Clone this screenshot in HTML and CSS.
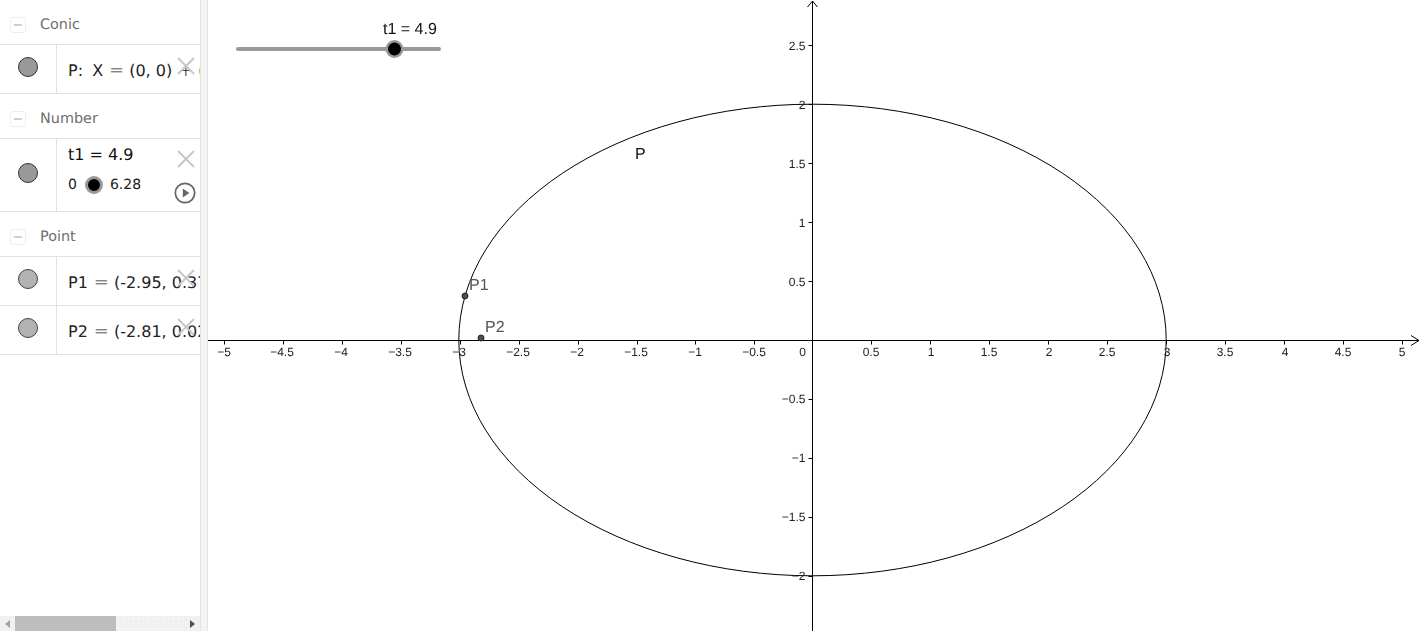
FILE: index.html
```html
<!DOCTYPE html>
<html lang="en">
<head>
<meta charset="utf-8">
<title>Conic</title>
<link rel="stylesheet" href="styles.css">
</head>
<body>
<div class="app">
  <aside class="algebra">
    <div class="tree">
      <div class="group"><span class="toggle"><i></i></span><span class="group-name">Conic</span></div>
      <div class="item item-50">
        <div class="marble-cell"><span class="marble dark"></span></div>
        <div class="formula"><span class="math">P<span class="colon">:</span> X<span class="op">=</span>(0, 0)<span class="op">+</span>(3 cos(t), 2 sin(t))</span></div>
        <svg class="close" viewBox="0 0 18 18"><path d="M1 1L17 17M17 1L1 17"/></svg>
      </div>
      <div class="group"><span class="toggle"><i></i></span><span class="group-name">Number</span></div>
      <div class="item item-74">
        <div class="marble-cell"><span class="marble dark"></span></div>
        <div class="formula slider-formula">
          <div class="plain">t1 = 4.9</div>
          <div class="minislider"><span>0</span><span class="knob"></span><span>6.28</span></div>
        </div>
        <svg class="close" viewBox="0 0 18 18"><path d="M1 1L17 17M17 1L1 17"/></svg>
        <svg class="play" viewBox="0 0 20 20"><circle cx="10" cy="10" r="8.8"/><path d="M8 6L14 10L8 14Z"/></svg>
      </div>
      <div class="group"><span class="toggle"><i></i></span><span class="group-name">Point</span></div>
      <div class="item item-50">
        <div class="marble-cell"><span class="marble light"></span></div>
        <div class="formula"><span class="math">P1<span class="op">=</span>(-2.95, 0.37)</span></div>
        <svg class="close" viewBox="0 0 18 18"><path d="M1 1L17 17M17 1L1 17"/></svg>
      </div>
      <div class="item item-50">
        <div class="marble-cell"><span class="marble light"></span></div>
        <div class="formula"><span class="math">P2<span class="op">=</span>(-2.81, 0.02)</span></div>
        <svg class="close" viewBox="0 0 18 18"><path d="M1 1L17 17M17 1L1 17"/></svg>
      </div>
    </div>
    <div class="hscroll">
      <span class="arrow left"></span>
      <span class="thumb"></span>
      <span class="rest"></span>
      <span class="arrow right"></span>
    </div>
  </aside>
  <div class="splitter"></div>
  <main class="graphics">
    <svg class="plot" viewBox="208 0 1214 633" width="1214" height="633">
      <g class="axis">
        <path d="M208 340.5H1419M1411 335.5L1419 340.5L1411 345.5"/>
        <path d="M812.5 631V1M807.5 7L812.5 1L817.5 7"/>
        <path d="M224.5 340.5v4M283.5 340.5v4M342.5 340.5v4M401.5 340.5v4M460.5 340.5v4M519.5 340.5v4M578.5 340.5v4M637.5 340.5v4M695.5 340.5v4M754.5 340.5v4M871.5 340.5v4M930.5 340.5v4M989.5 340.5v4M1048.5 340.5v4M1107.5 340.5v4M1166.5 340.5v4M1225.5 340.5v4M1284.5 340.5v4M1343.5 340.5v4M1402.5 340.5v4"/>
        <path d="M808.5 45.5h4M808.5 104.5h4M808.5 163.5h4M808.5 222.5h4M808.5 281.5h4M808.5 399.5h4M808.5 458.5h4M808.5 517.5h4M808.5 576.5h4"/>
      </g>
      <ellipse class="conic" cx="812.5" cy="340" rx="353.7" ry="235.8"/>
      <g class="ticks-x">
        <text x="224" y="356">−5</text><text x="282" y="356">−4.5</text><text x="341" y="356">−4</text><text x="400" y="356">−3.5</text><text x="459" y="356">−3</text><text x="518" y="356">−2.5</text><text x="577" y="356">−2</text><text x="636" y="356">−1.5</text><text x="695" y="356">−1</text><text x="754" y="356">−0.5</text>
        <text x="802.500" y="356">0</text>
        <text x="871" y="356">0.5</text><text x="931" y="356">1</text><text x="989" y="356">1.5</text><text x="1049" y="356">2</text><text x="1107" y="356">2.5</text><text x="1167" y="356">3</text><text x="1225" y="356">3.5</text><text x="1285" y="356">4</text><text x="1343" y="356">4.5</text><text x="1402" y="356">5</text>
      </g>
      <g class="ticks-y">
        <text x="805.500" y="50">2.5</text><text x="805.500" y="109">2</text><text x="805.500" y="168">1.5</text><text x="805.500" y="227">1</text><text x="805.500" y="286">0.5</text>
        <text x="805.500" y="403">−0.5</text><text x="805.500" y="462">−1</text><text x="805.500" y="521">−1.5</text><text x="805.500" y="580">−2</text>
      </g>
      <text class="label dark-label" x="635" y="159">P</text>
      <text class="label" x="469" y="290">P1</text>
      <text class="label" x="485" y="332">P2</text>
      <circle class="pt" cx="465" cy="296" r="3"/>
      <circle class="pt" cx="481" cy="338" r="3"/>
      <text class="label dark-label" x="383" y="34">t1 = 4.9</text>
      <path class="track" d="M238 49H439"/>
      <circle class="halo" cx="394.500" cy="49" r="9"/>
      <circle class="core" cx="394.500" cy="49" r="6.500"/>
    </svg>
  </main>
</div>
</body>
</html>
```
FILE: styles.css
```css
* { box-sizing: border-box; }
html, body { margin: 0; padding: 0; height: 100%; background: #fff; overflow: hidden; }
.app { display: flex; width: 1422px; height: 633px; }
.algebra { width: 200px; flex: none; display: flex; flex-direction: column; overflow: hidden; height: 631px; font-family: "DejaVu Sans", sans-serif; text-rendering: geometricPrecision; }
.tree { flex: 1; overflow: hidden; }
.group { height: 44px; display: flex; align-items: center; padding-left: 10px; padding-top: 5px; }
.toggle { width: 16px; height: 16px; border: 1px solid #eeeeee; border-radius: 3px; display: flex; align-items: center; justify-content: center; }
.toggle i { display: block; width: 8px; height: 2px; background: #cfcfcf; }
.group-name { margin-left: 14px; margin-top: 1px; font-size: 14.400px; color: #6e6e6e; }
.item { position: relative; display: flex; border-top: 1px solid #e2e2e2; border-bottom: 1px solid #e2e2e2; }
.item + .item { border-top: 0; height: 49px; }
.item-50 { height: 50px; }
.item-74 { height: 74px; }
.marble-cell { width: 57px; flex: none; border-right: 1px solid #e2e2e2; display: flex; justify-content: center; padding-top: 12px; }
.marble { width: 20px; height: 20px; border-radius: 50%; border: 1px solid #333; margin-right: 1px; }
.marble.dark { background: #999; }
.marble.light { background: #b3b3b3; border-color: #444; }
.item-74 .marble-cell { padding-top: 24px; }
.formula { flex: 1; min-width: 0; padding: 16px 0 0 11px; overflow: hidden; white-space: nowrap; font-size: 16px; color: #222; }
.colon { margin-right: 4px; }
.op { font-size: 18px; line-height: 1; margin: 0 5px 0 6px; font-weight: 300; }
.slider-formula { padding-top: 6px; }
.plain { font-size: 16px; color: #111; }
.minislider { display: flex; align-items: center; gap: 8px; margin-top: 12px; font-size: 14px; }
.minislider .knob + span { margin-left: -1px; }
.knob { width: 18px; height: 18px; border-radius: 50%; background: #000; border: 3px solid #999; }
.close { position: absolute; left: 177px; top: 12px; width: 18px; height: 18px; fill: none; stroke: #c8c8c8; stroke-width: 2; }
.item-74 .close { top: 11px; }
.play { position: absolute; left: 174px; top: 43px; width: 22px; height: 22px; }
.play circle { fill: #fff; stroke: #666; stroke-width: 1.600; }
.play path { fill: #666; }
.hscroll { height: 15px; flex: none; background: #f1f1f1; display: flex; align-items: center; }
.arrow { width: 0; height: 0; border-top: 4px solid transparent; border-bottom: 4px solid transparent; flex: none; }
.arrow.left { border-right: 5px solid #a3a3a3; margin-left: 5px; margin-right: 5px; }
.arrow.right { border-left: 5px solid #505050; margin-left: 5px; margin-right: 5px; }
.thumb { width: 101px; height: 100%; background: #bdbdbd; flex: none; }
.rest { flex: 1; height: 100%; background-image: radial-gradient(#fff 0.5px, transparent 0.6px); background-size: 5px 5px; }
.splitter { width: 8px; flex: none; border-left: 1px solid #e4e4e4; border-right: 1px solid #e4e4e4; background: #f4f4f4; height: 631px; }
.graphics { flex: 1; min-width: 0; }
.plot { display: block; font-family: "Liberation Sans", sans-serif; text-rendering: geometricPrecision; will-change: transform; }
.axis path { fill: none; stroke: #000; stroke-width: 1; }
.conic { fill: none; stroke: #000; stroke-width: 1; }
.ticks-x text { font-size: 12px; text-anchor: middle; fill: #222; }
.ticks-y text { font-size: 12px; text-anchor: end; fill: #222; }
.label { font-size: 16px; fill: #555; }
.dark-label { fill: #111; }
.pt { fill: #4d4d4d; stroke: #222; stroke-width: 1; }
.track { stroke: #999; stroke-width: 4; stroke-linecap: round; fill: none; }
.halo { fill: #999; }
.core { fill: #000; }
```
